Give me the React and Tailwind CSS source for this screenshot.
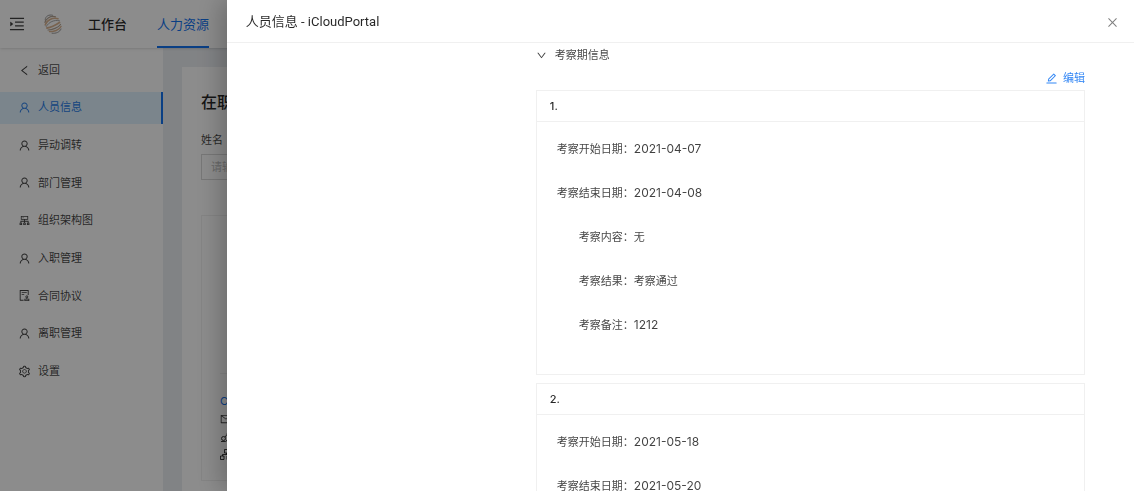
import {
  AiOutlineAudit,
  AiOutlineCluster,
  AiOutlineClose,
  AiOutlineDown,
  AiOutlineEdit,
  AiOutlineLeft,
  AiOutlineMail,
  AiOutlineMenuUnfold,
  AiOutlineSetting,
  AiOutlineUser,
} from "react-icons/ai";

const menuItems = [
  { label: "返回", icon: AiOutlineLeft },
  { label: "人员信息", icon: AiOutlineUser, active: true },
  { label: "异动调转", icon: AiOutlineUser },
  { label: "部门管理", icon: AiOutlineUser },
  { label: "组织架构图", icon: AiOutlineCluster },
  { label: "入职管理", icon: AiOutlineUser },
  { label: "合同协议", icon: AiOutlineAudit },
  { label: "离职管理", icon: AiOutlineUser },
  { label: "设置", icon: AiOutlineSetting },
];

const probations = [
  {
    start: "2021-04-07",
    end: "2021-04-08",
    content: "无",
    result: "考察通过",
    remark: "1212",
  },
  {
    start: "2021-05-18",
    end: "2021-05-20",
    content: "无",
    result: "考察通过",
    remark: "",
  },
];

const Logo = () => (
  <svg className="w-[18px] h-5" viewBox="0 0 18 20" fill="none" strokeLinecap="round">
    <path d="M1.200 5.500C1.500 2 5 .3 8.500 1.200" stroke="#9c9c9c" />
    <path d="M1 8.500C1.500 4.500 6.500 1.500 11.500 2.800" stroke="#b5a494" strokeWidth="1.200" />
    <path d="M1.200 11C2.500 6.500 8.500 3 14 4.800" stroke="#dbb592" strokeWidth="1.500" />
    <path d="M2.200 12.500C5 8 10 5.500 15.500 6.800" stroke="#a9a9a9" />
    <path d="M3 14C6.500 13.500 12.500 10.500 15.500 8.500" stroke="#dbb592" strokeWidth="1.800" />
    <path d="M4 16C8 16 14.500 13.500 16.500 10.500" stroke="#b5a494" strokeWidth="1.200" />
    <path d="M5.500 17.500C9.500 18 15.500 16 17 12.500" stroke="#dbb592" strokeWidth="1.400" />
    <path d="M8 19.200C12 19.800 16 18 17 15" stroke="#9c9c9c" />
  </svg>
);

const ContactIcon = () => (
  <svg className="w-[11px] h-[11px]" viewBox="0 0 11 11" fill="none" stroke="currentColor">
    <circle cx="3.500" cy="6.500" r="2" />
    <path d="M1 9.500h4.500l1.500-1M5 5L7 2.500" />
    <circle cx="8" cy="2" r="1" />
    <circle cx="8" cy="8.500" r="1" />
  </svg>
);

const DepartmentIcon = () => (
  <svg className="w-[11px] h-[11px]" viewBox="0 0 11 11" fill="none" stroke="currentColor">
    <path d="M4.500 .5h4v3.500h-4zM.5 7h3.500v3.500h-3.500zM7 7h3.500v3.500h-3.500zM6.500 4v1.500M2.500 7v-1.500h6.500v1.500" />
  </svg>
);

const Field = ({ label, value, numeric }) => (
  <div className="flex h-11 items-center">
    <dt className="w-[97px] text-right">{label}：</dt>
    <dd className={numeric ? "text-xs" : ""}>{value}</dd>
  </div>
);

const ProbationCard = ({ index, item }) => (
  <section className="border border-[#f0f0f0]">
    <h3 className="flex h-[31px] items-center border-b border-[#f0f0f0] px-[13px] font-medium text-black/85">
      {index}.
    </h3>
    <dl className="pt-[5px] pb-[27px]">
      <Field label="考察开始日期" value={item.start} numeric />
      <Field label="考察结束日期" value={item.end} numeric />
      <Field label="考察内容" value={item.content} />
      <Field label="考察结果" value={item.result} />
      <Field label="考察备注" value={item.remark} numeric />
    </dl>
  </section>
);

const Header = () => (
  <header className="z-10 flex h-12 shrink-0 items-center bg-white shadow-sm">
    <button aria-label="展开菜单" className="ml-2 mr-[18px]">
      <AiOutlineMenuUnfold className="size-[18px]" />
    </button>
    <Logo />
    <nav className="ml-[26px] flex h-full gap-[30px] text-[13px]">
      <a href="#workbench" className="flex items-center pt-[2px] font-medium text-black/85">
        工作台
      </a>
      <a
        href="#hr"
        className="flex items-center border-b-2 border-[#1373f0] pt-1 text-[#1373f0]"
      >
        人力资源
      </a>
    </nav>
  </header>
);

const Sidebar = () => (
  <aside className="w-[163px] shrink-0 bg-white pt-[6px]">
    <nav className="flex h-[333px] flex-col justify-between">
      {menuItems.map(({ label, icon: Icon, active }) => (
        <a
          key={label}
          href="#menu"
          className={
            active
              ? "flex h-8 items-center gap-[7px] border-r-2 border-[#1373f0] bg-[#e0f3ff] pl-[18px] text-[#2a7de8]"
              : "flex h-8 items-center gap-[7px] pl-[18px]"
          }
        >
          <Icon className="size-[13px]" />
          {label}
        </a>
      ))}
    </nav>
  </aside>
);

const StaffPage = () => (
  <main className="flex flex-1 bg-[#eceff3] pt-[19px] pl-[19px]">
    <div className="flex-1 bg-white px-[19px] pt-[23px]">
      <h1 className="text-base leading-6 font-medium text-black/85">在职人员</h1>
      <label htmlFor="name" className="mt-[18px] block leading-4">
        姓名
      </label>
      <input
        id="name"
        placeholder="请输入"
        className="mt-[6px] block h-[26px] w-48 border border-[#d9d9d9] px-[9px] placeholder:text-[#bfbfbf]"
      />
      <div className="mt-[35px] h-[266px] w-60 border border-[#f0f0f0] px-[18px]">
        <div className="h-[158px] border-b border-[#f0f0f0]" />
        <ul className="mt-[18px]">
          <li className="h-[18px] leading-[18px] text-[#1373f0]">Carl</li>
          <li className="flex h-[18px] items-center">
            <AiOutlineMail className="size-3" />
          </li>
          <li className="flex h-[18px] items-center">
            <ContactIcon />
          </li>
          <li className="flex h-4 items-center">
            <DepartmentIcon />
          </li>
        </ul>
      </div>
    </div>
  </main>
);

const Drawer = () => (
  <div
    role="dialog"
    aria-labelledby="drawer-title"
    className="fixed inset-y-0 right-0 z-30 flex w-4/5 flex-col bg-white shadow-[-6px_0_24px_rgba(0,0,0,0.25)]"
  >
    <div className="flex h-[43px] shrink-0 items-center justify-between border-b border-[#f0f0f0] pt-[2px] pl-[19px] pr-[15px]">
      <h2
        id="drawer-title"
        className="font-['Roboto','Noto_Sans_CJK_SC',sans-serif] text-[13px] text-black/85"
      >
        人员信息 - iCloudPortal
      </h2>
      <button aria-label="关闭" className="text-black/50">
        <AiOutlineClose className="size-[13px]" />
      </button>
    </div>
    <div className="flex-1 overflow-hidden pl-[309px] pr-[49px]">
      <button className="flex h-6 items-center gap-2">
        <AiOutlineDown className="size-[11px]" />
        考察期信息
      </button>
      <div className="flex h-[23px] justify-end">
        <button className="flex h-[22px] items-center gap-[5px] text-[#3387f5]">
          <AiOutlineEdit className="size-[13px]" />
          编辑
        </button>
      </div>
      <div className="flex flex-col gap-2">
        {probations.map((item, i) => (
          <ProbationCard key={item.start} index={i + 1} item={item} />
        ))}
      </div>
    </div>
  </div>
);

const App = () => {
  return (
    <div className="flex h-screen flex-col overflow-hidden bg-white font-['Inter','Noto_Sans_CJK_SC',sans-serif] text-[11px] text-black/75">
      <Header />
      <div className="flex flex-1">
        <Sidebar />
        <StaffPage />
      </div>
      <div className="fixed inset-0 z-20 bg-black/45" />
      <Drawer />
    </div>
  );
};

export default App;
